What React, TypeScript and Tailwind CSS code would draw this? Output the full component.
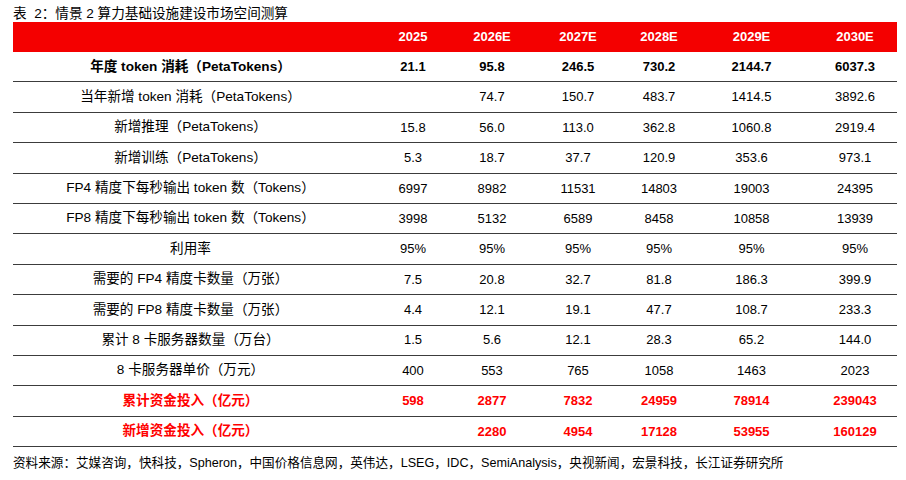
const years = ["2025", "2026E", "2027E", "2028E", "2029E", "2030E"]

type Row = {
  label: string
  values: string[]
  tone?: "bold" | "red"
}

const rows: Row[] = [
  { label: "年度 token 消耗（PetaTokens）", values: ["21.1", "95.8", "246.5", "730.2", "2144.7", "6037.3"], tone: "bold" },
  { label: "当年新增 token 消耗（PetaTokens）", values: ["", "74.7", "150.7", "483.7", "1414.5", "3892.6"] },
  { label: "新增推理（PetaTokens）", values: ["15.8", "56.0", "113.0", "362.8", "1060.8", "2919.4"] },
  { label: "新增训练（PetaTokens）", values: ["5.3", "18.7", "37.7", "120.9", "353.6", "973.1"] },
  { label: "FP4 精度下每秒输出 token 数（Tokens）", values: ["6997", "8982", "11531", "14803", "19003", "24395"] },
  { label: "FP8 精度下每秒输出 token 数（Tokens）", values: ["3998", "5132", "6589", "8458", "10858", "13939"] },
  { label: "利用率", values: ["95%", "95%", "95%", "95%", "95%", "95%"] },
  { label: "需要的 FP4 精度卡数量（万张）", values: ["7.5", "20.8", "32.7", "81.8", "186.3", "399.9"] },
  { label: "需要的 FP8 精度卡数量（万张）", values: ["4.4", "12.1", "19.1", "47.7", "108.7", "233.3"] },
  { label: "累计 8 卡服务器数量（万台）", values: ["1.5", "5.6", "12.1", "28.3", "65.2", "144.0"] },
  { label: "8 卡服务器单价（万元）", values: ["400", "553", "765", "1058", "1463", "2023"] },
  { label: "累计资金投入（亿元）", values: ["598", "2877", "7832", "24959", "78914", "239043"], tone: "red" },
  { label: "新增资金投入（亿元）", values: ["", "2280", "4954", "17128", "53955", "160129"], tone: "red" },
]

// column widths measured off the report table
const cols = "grid grid-cols-[357px_86px_72px_100px_62px_123px_84px]"

export default function App() {
  return (
    <div className="w-[906px] h-[480px] bg-white text-black font-['Liberation_Sans','Noto_Sans_CJK_SC',sans-serif]">
      <div className="pl-[13px] pt-[6px]">
        <p className="h-[16px] text-[13.6px] leading-[16px] whitespace-pre">表  2：情景 2 算力基础设施建设市场空间测算</p>

        <div className="w-[884px]">
          <div className={`${cols} h-[30px] bg-[#f40000] text-white text-[13px] font-bold`}>
            <div />
            {years.map((y) => (
              <div key={y} className="flex items-center justify-center">
                {y}
              </div>
            ))}
          </div>

          {rows.map((row) => (
            <div
              key={row.label}
              className={`${cols} h-[30.4px] border-b border-[#3c3c3c] text-[13px] ${
                row.tone === "bold" ? "font-bold" : row.tone === "red" ? "text-[#ff0000]" : ""
              }`}
            >
              <div
                className={`flex items-center justify-center pr-[2px] text-[13.6px] ${
                  row.tone === "red" ? "font-semibold" : ""
                }`}
              >
                {row.label}
              </div>
              {row.values.map((v, i) => (
                <div key={i} className={`flex items-center justify-center ${row.tone === "red" ? "font-bold" : ""}`}>
                  {v}
                </div>
              ))}
            </div>
          ))}
        </div>

        <p className="mt-[9px] text-[12.6px] leading-[14px]">
          资料来源：艾媒咨询，快科技，Spheron，中国价格信息网，英伟达，LSEG，IDC，SemiAnalysis，央视新闻，宏景科技，长江证券研究所
        </p>
      </div>
    </div>
  )
}
